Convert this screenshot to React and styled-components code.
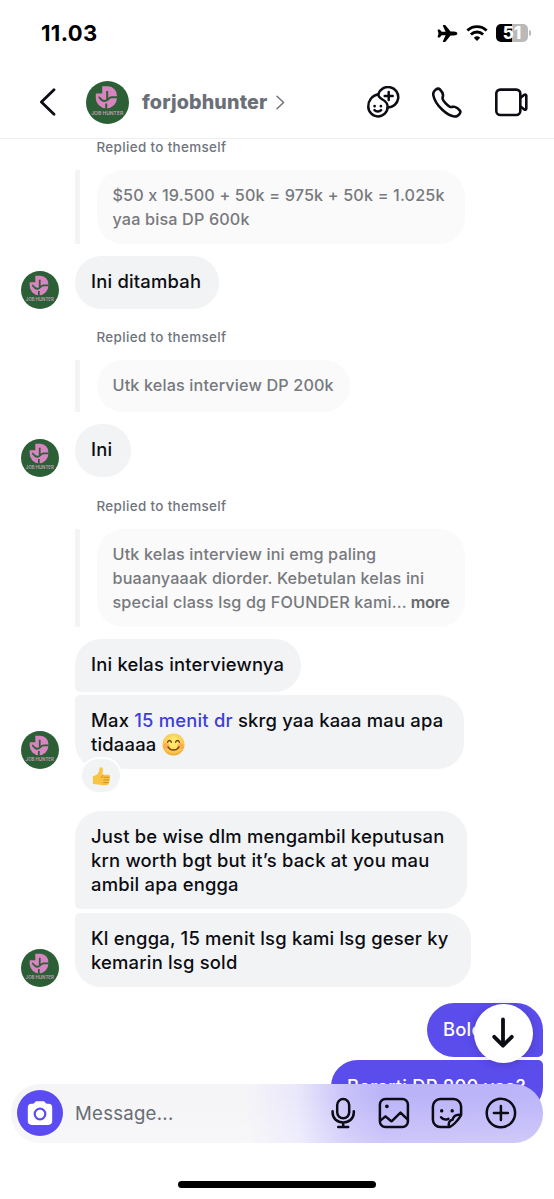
import React from "react";
import styled, { createGlobalStyle } from "styled-components";
import { IoAirplane } from "react-icons/io5";

const messages = [
  { id: 1, quote: ["$50 x 19.500 + 50k = 975k + 50k = 1.025k", "yaa bisa DP 600k"], quoteWidth: 368.5 },
  { id: 2, lines: ["Ini ditambah"], width: 144, top: 12, avatar: true },
  { id: 3, quote: ["Utk kelas interview DP 200k"], quoteWidth: 253, top: 20 },
  { id: 4, lines: ["Ini"], width: 56, top: 12, avatar: true },
  {
    id: 5,
    quote: [
      "Utk kelas interview ini emg paling",
      "buaanyaaak diorder. Kebetulan kelas ini",
      "special class lsg dg FOUNDER kami...",
    ],
    more: true,
    quoteWidth: 368.5,
    top: 21,
  },
  { id: 6, lines: ["Ini kelas interviewnya"], width: 226, top: 11.5, group: "first" },
];

function App() {
  return (
    <Screen>
      <GlobalStyle />
      <StatusBar>
        <Time>11.03</Time>
        <StatusIcons>
          <Plane />
          <WifiIcon />
          <Battery>
            <BatteryBody>51</BatteryBody>
            <BatteryTip />
          </Battery>
        </StatusIcons>
      </StatusBar>
      <Header>
        <BackIcon />
        <HeaderAvatar>
          <Logo />
        </HeaderAvatar>
        <UserName>forjobhunter</UserName>
        <ChevronIcon />
        <HeaderActions>
          <FriendIcon />
          <PhoneIcon />
          <VideoIcon />
        </HeaderActions>
      </Header>
      <Chat>
        {messages.map((m) =>
          m.quote ? (
            <Reply key={m.id} $top={m.top}>
              <ReplyLabel>Replied to themself</ReplyLabel>
              <QuoteRow>
                <QuoteBar />
                <Quote $width={m.quoteWidth}>
                  {m.quote.map((line, i) => (
                    <Line key={line}>
                      {line}
                      {m.more && i === m.quote.length - 1 && <More> more</More>}
                    </Line>
                  ))}
                </Quote>
              </QuoteRow>
            </Reply>
          ) : (
            <MessageRow key={m.id} $top={m.top}>
              <AvatarSlot>
                {m.avatar && (
                  <Avatar>
                    <Logo />
                  </Avatar>
                )}
              </AvatarSlot>
              <Bubble $width={m.width} $group={m.group}>
                {m.lines.map((line) => (
                  <Line key={line}>{line}</Line>
                ))}
              </Bubble>
            </MessageRow>
          )
        )}
        <MessageRow $top={3.5}>
          <AvatarSlot>
            <Avatar>
              <Logo />
            </Avatar>
          </AvatarSlot>
          <Bubble $width={389} $group="last">
            <Line>
              Max <TimeLink>15 menit dr</TimeLink> skrg yaa kaaa mau apa
            </Line>
            <Line>
              tidaaaa <SmileEmoji />
            </Line>
            <Reaction>
              <ThumbEmoji />
            </Reaction>
          </Bubble>
        </MessageRow>
        <MessageRow $top={42}>
          <AvatarSlot />
          <Bubble $width={392} $group="first">
            <Line>Just be wise dlm mengambil keputusan</Line>
            <Line>krn worth bgt but it’s back at you mau</Line>
            <Line>ambil apa engga</Line>
          </Bubble>
        </MessageRow>
        <MessageRow $top={4}>
          <AvatarSlot>
            <Avatar>
              <Logo />
            </Avatar>
          </AvatarSlot>
          <Bubble $width={396} $group="last">
            <Line>Kl engga, 15 menit lsg kami lsg geser ky</Line>
            <Line>kemarin lsg sold</Line>
          </Bubble>
        </MessageRow>
        <SentRow $top={16}>
          <SentBubble $width={116} $first>
            Boleh kak
          </SentBubble>
        </SentRow>
        <SentRow $top={3}>
          <SentBubble $width={212}>Berarti DP 800 yaa?</SentBubble>
        </SentRow>
      </Chat>
      <ScrollDown>
        <ArrowDownIcon />
      </ScrollDown>
      <Composer>
        <CameraButton>
          <CameraIcon />
        </CameraButton>
        <Placeholder>Message...</Placeholder>
        <ComposerActions>
          <MicIcon />
          <ImageIcon />
          <StickerIcon />
          <PlusIcon />
        </ComposerActions>
      </Composer>
      <HomeIndicator />
    </Screen>
  );
}

export default App;

function Logo() {
  return (
    <svg viewBox="0 0 43 43" width="100%" height="100%">
      <circle cx="21.5" cy="21.5" r="21.5" fill="#2d5f37" />
      <path
        d="M16.2 5.3h5.8a9.4 9.4 0 0 1 9 9.7v1.8A10.6 10.6 0 0 1 20.4 27.4 10.6 10.6 0 0 1 9.8 16.8v-4.2h6.4z"
        fill="#d884c0"
      />
      <path
        d="M21.2 10v9.6M12.6 16.2c1 0 1.6 1.5 3.1 2.8 1.8 1.6 3.3 1.4 5.2.2 1.8-1 2.5-3 4.6-3h6M20.2 22.5v5.5"
        fill="none"
        stroke="#2d5f37"
        strokeWidth="2"
      />
      <text
        x="21.2"
        y="33.8"
        textAnchor="middle"
        textLength="32"
        lengthAdjust="spacingAndGlyphs"
        fontFamily="Inter, sans-serif"
        fontSize="5"
        fontWeight="600"
        fill="#c3a0b5"
      >
        JOB HUNTER
      </text>
    </svg>
  );
}

function WifiIcon() {
  return (
    <svg width="22" height="18" viewBox="0 0 22 18" fill="none" stroke="#000" strokeWidth="2.9">
      <path d="M1.4 6.5a13.8 13.8 0 0 1 19.2 0M4.9 10.5a8.8 8.8 0 0 1 12.2 0" />
      <path d="M11 17 7.8 13.8a4.7 4.7 0 0 1 6.4 0z" fill="#000" stroke="none" />
    </svg>
  );
}

function BackIcon() {
  return (
    <Stroke width="17" height="28" viewBox="0 0 17 28" $weight={2.8}>
      <path d="M15 1.8 2.4 14 15 26.2" />
    </Stroke>
  );
}

function ChevronIcon() {
  return (
    <Chevron width="9" height="15" viewBox="0 0 9 15" $weight={1.4}>
      <path d="m1 1.2 6.6 6.3L1 13.8" />
    </Chevron>
  );
}

function FriendIcon() {
  return (
    <Stroke width="33" height="33" viewBox="0 0 33 33" $weight={2.5}>
      <path d="M11.3 8.2C4.7 9.6 1.3 14.6 1.3 20.6a9.7 9.7 0 0 0 19.4.2C20.7 12.6 10.9 14.4 11.3 8.2z" />
      <path d="M11.3 8.2a10.2 10.2 0 1 1 9.3 13.2M21.7 6v8M17.7 10h8" />
      <path d="M7.5 24.2c1.7 1.7 4.8 1.7 6.6-.1" />
      <path d="M7.6 20.1v.1M13.9 20.1v.1" strokeWidth="2.7" />
    </Stroke>
  );
}

function PhoneIcon() {
  return (
    <Stroke width="31" height="31" viewBox="0 0 31 31" $weight={2.6}>
      <path d="M3.6 2.8C5 1.7 6.8 1.3 8 2.5c1.2 1.3 2.8 3.9 3 5.2.2 1.7-.7 2.7-.4 4 .5 2.4 4.7 6.8 7.3 8.1 1.6.8 3.2-.6 5 .1 1.4.5 3.9 2.3 5 3.7.8 1 .4 2.3-.4 3.4-1.3 1.9-3 2.7-5.2 2.5-3.3-.4-7.7-2.7-12-6.7-5-4.8-8.2-10-9-14.7-.4-2.2.6-4 2.3-5.3z" />
    </Stroke>
  );
}

function VideoIcon() {
  return (
    <Stroke width="33" height="29" viewBox="0 0 33 29" $weight={2.6}>
      <rect x="1.3" y="1.6" width="24" height="25.4" rx="4" />
      <path d="m25.5 9.8 3.9-3.1c.8-.6 1.9 0 1.9 1v12.8c0 1-1.1 1.6-1.9 1l-3.9-3.1" />
    </Stroke>
  );
}

function ArrowDownIcon() {
  return (
    <Stroke width="24" height="32" viewBox="0 0 24 32" $weight={3.8}>
      <path d="M12 2.5v26M3.2 19.8l8.8 8.9 8.8-8.9" />
    </Stroke>
  );
}

function CameraIcon() {
  return (
    <svg width="26" height="26" viewBox="0 0 26 26">
      <path
        d="M9.3 1.2h7.4c1.4 0 1.8 2.6 3.3 2.6h1.4a3.8 3.8 0 0 1 3.8 3.8v13.5a3.8 3.8 0 0 1-3.8 3.8H4.6a3.8 3.8 0 0 1-3.8-3.8V7.6a3.8 3.8 0 0 1 3.8-3.8H6c1.5 0 1.9-2.6 3.3-2.6z"
        fill="#fff"
      />
      <circle cx="13" cy="14" r="5.3" fill="none" stroke="#5a4cf0" strokeWidth="2.2" />
    </svg>
  );
}

function MicIcon() {
  return (
    <Mic width="32" height="32" viewBox="0 0 32 32" $weight={2.5}>
      <rect x="10.2" y="2.1" width="12" height="19.2" rx="6" />
      <path d="M5.6 14.2v1.4c0 6 4.6 9.9 10.6 9.9s10.6-3.9 10.6-9.9v-1.4M16.2 25.5v4M11.2 30h10" />
    </Mic>
  );
}

function ImageIcon() {
  return (
    <Stroke width="32" height="32" viewBox="0 0 32 32" $weight={2.5}>
      <rect x="1.9" y="2.1" width="28" height="28" rx="5.5" />
      <path d="m2.3 23.6 5.2-4.2 5.2 4.4c.5.4 1 .4 1.4 0l8.4-8.2 7 6.8" />
      <circle cx="8.9" cy="9.3" r="1.1" fill="#0c0c18" strokeWidth="1.6" />
    </Stroke>
  );
}

function StickerIcon() {
  return (
    <Stroke width="32" height="32" viewBox="0 0 32 32" $weight={2.5}>
      <path d="M18.5 30H9.2A7.4 7.4 0 0 1 1.9 22.7V9.5a7.4 7.4 0 0 1 7.3-7.4h13.6a7.4 7.4 0 0 1 7.3 7.4v8.4C29 20.8 22.5 28.5 18.5 30z" />
      <path d="M18 29.8c-.9-4.2.6-6.6 3.5-7 1-3.9 3.8-5.7 8.4-4.9" />
      <path d="M10 20.3c1.6 2 4.6 2.8 7.4 1.5" />
      <path d="M10.7 13.8v.1M21.2 13.8v.1" strokeWidth="3.4" />
    </Stroke>
  );
}

function PlusIcon() {
  return (
    <Stroke width="32" height="32" viewBox="0 0 32 32" $weight={2.5}>
      <circle cx="15.9" cy="16" r="14.2" />
      <path d="M15.9 9v14M8.9 16h14" />
    </Stroke>
  );
}

function SmileEmoji() {
  return (
    <Emoji width="23" height="23" viewBox="0 0 23 23">
      <defs>
        <radialGradient id="face" cx="50%" cy="40%" r="60%">
          <stop offset="0.3" stopColor="#ffe76c" />
          <stop offset="0.8" stopColor="#fac34a" />
          <stop offset="1" stopColor="#eda32c" />
        </radialGradient>
      </defs>
      <circle cx="11.5" cy="11.5" r="11" fill="url(#face)" />
      <circle cx="4.5" cy="13" r="3" fill="#f58a4a" opacity="0.45" />
      <circle cx="18.5" cy="13" r="3" fill="#f58a4a" opacity="0.45" />
      <path
        d="M5.6 9.3c.8-2.4 3-2.4 3.8 0M13.6 9.3c.8-2.4 3-2.4 3.8 0M6 13.8c2.4 4.3 8.6 4.3 11 0"
        fill="none"
        stroke="#7a4318"
        strokeWidth="1.4"
        strokeLinecap="round"
      />
    </Emoji>
  );
}

function ThumbEmoji() {
  return (
    <svg width="19" height="20" viewBox="0 0 20 21">
      <path
        d="M1 9.5c2.2-.3 4.4-1.3 5.6-3.2C7.9 4.3 7.6 2.4 8.2 1c.6-1.2 2.9-.8 3.2 1.3.3 2-.6 4-.5 5.7h6.4c1.9 0 2.1 2.2.9 2.7 1.2.6 1.1 2.3-.2 2.8.9.9.7 2.4-.6 2.8.6 1.2-.1 2.5-1.5 2.6-2.9.3-7.3.5-9.6-.4-1.6-.5-3.3-.7-5.3-.7z"
        fill="#fac342"
      />
      <path
        d="M12.5 10.8H18M12.3 13.6h5.5M12.3 16.4h4.9M11.6 8.5c-1 .6-1.5 1.5-1.4 2.7"
        fill="none"
        stroke="#c98518"
        strokeWidth="0.9"
        strokeLinecap="round"
      />
    </svg>
  );
}

const GlobalStyle = createGlobalStyle`
  * {
    box-sizing: border-box;
  }
  body {
    margin: 0;
    background: #fff;
    font-family: Inter, "Liberation Sans", sans-serif;
  }
  svg {
    display: block;
    flex: none;
  }
`;

const Screen = styled.div`
  position: relative;
  display: flex;
  flex-direction: column;
  width: 554px;
  height: 1199px;
  overflow: hidden;
  background: #fff;
`;

const StatusBar = styled.div`
  height: 66px;
  flex: none;
  display: flex;
  justify-content: space-between;
  align-items: center;
  padding: 0 23px 0 41px;
`;

const Time = styled.span`
  font-size: 22px;
  font-weight: 700;
  letter-spacing: 0.35px;
  color: #000;
`;

const StatusIcons = styled.div`
  display: flex;
  align-items: center;
  gap: 8px;
`;

const Plane = styled(IoAirplane)`
  width: 21px;
  height: 21px;
  color: #000;
`;

const Battery = styled.div`
  display: flex;
  align-items: center;
  gap: 1px;
`;

const BatteryBody = styled.div`
  width: 32px;
  height: 18px;
  border-radius: 5px;
  background: linear-gradient(90deg, #000 50%, #b9b9b9 50%);
  color: #fff;
  font-size: 17px;
  font-weight: 800;
  line-height: 18px;
  text-align: center;
`;

const BatteryTip = styled.div`
  width: 2px;
  height: 6px;
  border-radius: 0 3px 3px 0;
  background: #b9b9b9;
`;

const Header = styled.header`
  height: 73px;
  flex: none;
  display: flex;
  align-items: center;
  padding: 0 26px 0 39px;
  border-bottom: 1px solid #eeeff1;
`;

const HeaderAvatar = styled.div`
  width: 43px;
  height: 43px;
  margin-left: 30px;
`;

const UserName = styled.span`
  margin-left: 13px;
  width: 126px;
  font-size: 19.7px;
  font-weight: 800;
  letter-spacing: 0.15px;
  color: #6b7078;
  white-space: nowrap;
`;

const HeaderActions = styled.div`
  display: flex;
  align-items: center;
  gap: 32px;
  margin-left: auto;
`;

const Stroke = styled.svg`
  fill: none;
  stroke: #0c0c14;
  stroke-width: ${(p) => p.$weight};
  stroke-linecap: round;
  stroke-linejoin: round;
`;

const Chevron = styled(Stroke)`
  margin-left: 8px;
  stroke: #6b7078;
`;

const Mic = styled(Stroke)`
  margin-right: -2.5px;
`;

const Chat = styled.main`
  flex: 1;
  min-height: 0;
  overflow: hidden;
`;

const Reply = styled.div`
  padding-left: 75px;
  margin-top: ${(p) => p.$top || 0}px;
`;

const ReplyLabel = styled.div`
  height: 31px;
  padding-left: 21.5px;
  font-size: 13.4px;
  font-weight: 500;
  line-height: 17px;
  letter-spacing: 0.36px;
  color: #6f747c;
`;

const QuoteRow = styled.div`
  display: flex;
  gap: 16.5px;
`;

const QuoteBar = styled.div`
  width: 5px;
  border-radius: 1px;
  background: #f3f4f6;
`;

const Quote = styled.div`
  width: ${(p) => p.$width}px;
  min-height: 52px;
  padding: 13px 16px;
  border-radius: 26px;
  background: #fafafa;
  color: #77797d;
  font-size: 16.2px;
  font-weight: 500;
  letter-spacing: 0.15px;
`;

const More = styled.span`
  color: #66696e;
  font-weight: 600;
  letter-spacing: -0.3px;
`;

const Line = styled.div`
  height: 24px;
  line-height: 24px;
  white-space: pre;
`;

const MessageRow = styled.div`
  display: flex;
  align-items: flex-end;
  margin-top: ${(p) => p.$top}px;
`;

const AvatarSlot = styled.div`
  width: 75px;
  padding-left: 21px;
`;

const Avatar = styled.div`
  width: 38px;
  height: 38px;
`;

const corners = {
  first: "26px 26px 26px 5px",
  last: "5px 26px 26px 26px",
};

const Bubble = styled.div`
  position: relative;
  width: ${(p) => p.$width}px;
  min-height: 53px;
  padding: 13px 16px;
  border-radius: ${(p) => corners[p.$group] || "27px"};
  background: #f2f3f5;
  color: #0b0d12;
  font-size: 18.4px;
  font-weight: 500;
  letter-spacing: 0.2px;
`;

const TimeLink = styled.span`
  color: #3d3fd8;
`;

const Emoji = styled.svg`
  display: inline-block;
  vertical-align: -5px;
`;

const Reaction = styled.div`
  position: absolute;
  left: 5px;
  bottom: -25px;
  display: flex;
  align-items: center;
  justify-content: center;
  width: 42px;
  height: 37px;
  padding-top: 2px;
  border: 2px solid #fff;
  border-radius: 19px;
  background: #f2f3f5;
`;

const SentRow = styled.div`
  display: flex;
  justify-content: flex-end;
  padding-right: 11px;
  margin-top: ${(p) => p.$top}px;
`;

const SentBubble = styled.div`
  width: ${(p) => p.$width}px;
  height: 53.5px;
  padding: 0 16px;
  border-radius: ${(p) => (p.$first ? "27px 27px 5px 27px" : "27px 5px 27px 27px")};
  background: #5b4cec;
  color: #fff;
  font-size: 18.4px;
  font-weight: 500;
  line-height: 52px;
  letter-spacing: 0.2px;
  white-space: nowrap;
`;

const ScrollDown = styled.button`
  position: absolute;
  right: 21.5px;
  top: 1003.5px;
  display: flex;
  align-items: center;
  justify-content: center;
  width: 59px;
  height: 59px;
  padding: 0;
  border: 0;
  border-radius: 50%;
  background: #fff;
  box-shadow: 0 1px 8px rgba(0, 0, 0, 0.18);
`;

const Composer = styled.div`
  position: absolute;
  left: 11px;
  right: 11px;
  top: 1084px;
  height: 58.5px;
  display: flex;
  align-items: center;
  padding: 0 26.5px 0 6px;
  border-radius: 29px;
  background: linear-gradient(
      180deg,
      rgba(255, 255, 255, 0) 20%,
      rgba(255, 255, 255, 0.27) 100%
    ),
    linear-gradient(90deg, #f5f5f7 44%, #e9e7fb 54%, #c8c2f9 63%, #bbb3f8 70%, #bdb5f9 100%);
`;

const CameraButton = styled.button`
  display: flex;
  align-items: center;
  justify-content: center;
  width: 46px;
  height: 46px;
  padding: 0;
  border: 0;
  border-radius: 50%;
  background: #5a4cf0;
`;

const Placeholder = styled.span`
  margin-left: 12px;
  font-size: 18.6px;
  letter-spacing: 0.25px;
  color: #686d74;
`;

const ComposerActions = styled.div`
  display: flex;
  gap: 21.5px;
  margin-left: auto;
`;

const HomeIndicator = styled.div`
  position: absolute;
  left: 178px;
  bottom: 11px;
  width: 198px;
  height: 7px;
  border-radius: 4px;
  background: #000;
`;
